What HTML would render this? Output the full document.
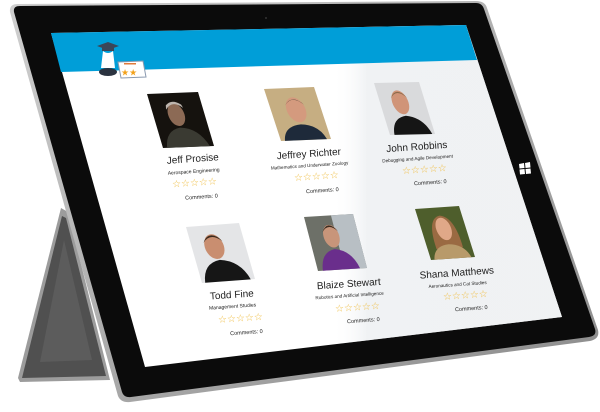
<!DOCTYPE html>
<html><head><meta charset="utf-8"><style>
html,body{margin:0;padding:0;background:#fff;width:600px;height:412px;overflow:hidden}
svg{display:block}
text{font-family:"Liberation Sans",sans-serif;fill:#222}
</style></head><body>
<svg width="600" height="412" viewBox="0 0 600 412" xmlns="http://www.w3.org/2000/svg">
<defs>
<linearGradient id="rim" x1="0" y1="0" x2="1" y2="1"><stop offset="0" stop-color="#d0d0d0"/><stop offset="1" stop-color="#8a8a8a"/></linearGradient>
<linearGradient id="glare" x1="0" y1="0" x2="1" y2="0"><stop offset="0" stop-color="#fff" stop-opacity="0"/><stop offset="0.55" stop-color="#fff" stop-opacity="0"/><stop offset="0.62" stop-color="#e9ecef" stop-opacity="0.7"/><stop offset="1" stop-color="#eef0f2" stop-opacity="0.9"/></linearGradient>
</defs>
<!-- kickstand -->
<polygon points="61,208 68,212 110,380 20,382 18,378" fill="#9c9c9c"/>
<polygon points="62,216 66,218 106,376 22,378" fill="#505050"/>
<polygon points="64,240 92,360 40,362" fill="#5c5c5c"/>
<!-- tablet -->
<path d="M10,12 Q9,4 18,4 L476,1 Q485,1 487,8 L598,330 Q600,339 590,341 L130,402 Q121,403 118,396 Z" fill="url(#rim)"/>
<path d="M14,12 Q13,6 20,6 L476,3 Q482,3 484,9 L595,329 Q597,336 589,337 L131,397 Q124,398 122,392 Z" fill="#0b0b0b"/>
<circle cx="266" cy="18" r="1" fill="#333"/>
<!-- screen -->
<polygon points="51,33 466,25 562,317 145,367" fill="#fff"/>
<polygon points="51,33 466,25 562,317 145,367" fill="url(#glare)"/>
<polygon points="51,33 466,25 477,60 61,72" fill="#009ed8"/>
<!-- logo -->
<polygon points="97,46 108,42 119,46 108,50" fill="#3b4658"/>
<rect x="102" y="47" width="12" height="4" fill="#3b4658"/>
<path d="M103,51 Q108,55 113,51 L115,68 L101,68 Z" fill="#fff"/>
<ellipse cx="108" cy="72" rx="9" ry="4" fill="#2b3340"/>
<polygon points="118,62 143,61 146,77 121,78" fill="#fff" stroke="#8a9ab0" stroke-width="1"/>
<rect x="124" y="63" width="12" height="1.5" fill="#e07a3a"/>
<text x="121" y="75.5" font-size="9" style="fill:#f2a11a">★★</text>
<!-- windows logo -->
<g fill="#fff"><polygon points="519,164 524,163 524.5,168 519.5,168.5"/><polygon points="525,163 530,162 530.5,167.5 525.5,168"/><polygon points="519.5,169.5 524.5,169 525,174 520,174.5"/><polygon points="525.5,169 530.5,168.5 531,173.5 526,174"/></g>

<!-- photos -->
<g transform="matrix(.51,-.02,.16,.54,147,94)">
<rect width="100" height="100" fill="#15120e"/><ellipse cx="45" cy="40" rx="16" ry="21" fill="#8c6a55"/><path d="M28,30 Q45,12 62,28 L60,22 Q45,10 30,22Z" fill="#bdb5ae"/><path d="M8,100 Q15,68 45,64 Q80,66 92,100Z" fill="#3a3a32"/></g>
<g transform="matrix(.50,-.02,.17,.52,264,89)">
<rect width="100" height="100" fill="#c6ae82"/><ellipse cx="50" cy="42" rx="19" ry="24" fill="#d49a7e"/><path d="M31,33 Q50,12 69,33 Q60,22 50,22 Q40,22 31,33Z" fill="#5a4a3a"/><path d="M8,100 Q15,72 50,70 Q85,72 92,100Z" fill="#1e2a3a"/></g>
<g transform="matrix(.45,-.01,.16,.52,374,83)">
<rect width="100" height="100" fill="#d9dadc"/><ellipse cx="45" cy="38" rx="18" ry="23" fill="#d09478"/><path d="M27,30 Q45,10 63,30 Q55,18 45,18 Q35,18 27,30Z" fill="#8a6a4a"/><path d="M10,100 Q15,68 48,64 Q85,68 94,100Z" fill="#151515"/></g>
<g transform="matrix(.53,-.04,.16,.56,186,227)">
<rect width="100" height="100" fill="#e4e5e7"/><ellipse cx="42" cy="38" rx="18" ry="22" fill="#c98e70"/><path d="M24,30 Q42,12 60,30 Q52,18 42,18 Q32,18 24,30Z" fill="#3a2a1e"/><path d="M6,100 Q12,66 45,62 Q82,66 92,100Z" fill="#161616"/></g>
<g transform="matrix(.49,-.03,.14,.54,304,217)">
<rect width="100" height="100" fill="#6d7068"/><rect x="55" width="45" height="100" fill="#b8bfc4"/><ellipse cx="45" cy="38" rx="16" ry="21" fill="#c8957a"/><path d="M29,30 Q45,12 61,30 Q53,18 45,18 Q37,18 29,30Z" fill="#3c2c20"/><path d="M10,100 Q15,66 45,62 Q78,66 86,100Z" fill="#6a2e8c"/></g>
<g transform="matrix(.44,-.03,.16,.51,415,209)">
<rect width="100" height="100" fill="#4e5e2c"/><path d="M20,80 Q18,20 50,16 Q82,20 80,80Z" fill="#9a6a42"/><ellipse cx="50" cy="42" rx="17" ry="22" fill="#e0a888"/><path d="M8,100 Q15,74 50,72 Q85,74 92,100Z" fill="#b89a6a"/></g>

<!-- text -->
<g transform="translate(193,162) rotate(-4)" text-anchor="middle"><text font-size="10">Jeff Prosise</text><text y="11" font-size="5">Aerospace Engineering</text><text y="24" font-size="10" style="fill:#f0c04a">☆☆☆☆☆</text><text y="37" x="6" font-size="5.5">Comments: 0</text></g>
<g transform="translate(309,157) rotate(-4)" text-anchor="middle"><text font-size="10">Jeffrey Richter</text><text y="10" font-size="4.6">Mathematics and Underwater Zoology</text><text y="23" x="6" font-size="10" style="fill:#f0c04a">☆☆☆☆☆</text><text y="36" x="11" font-size="5.5">Comments: 0</text></g>
<g transform="translate(417,150) rotate(-4)" text-anchor="middle"><text font-size="10">John Robbins</text><text y="10" font-size="4.6">Debugging and Agile Development</text><text y="23" x="6" font-size="10" style="fill:#f0c04a">☆☆☆☆☆</text><text y="35" x="11" font-size="5.5">Comments: 0</text></g>
<g transform="translate(232,298) rotate(-4)" text-anchor="middle"><text font-size="10">Todd Fine</text><text y="10" font-size="5">Management Studies</text><text y="24" x="7" font-size="10" style="fill:#f0c04a">☆☆☆☆☆</text><text y="37" x="12" font-size="5.5">Comments: 0</text></g>
<g transform="translate(349,287) rotate(-4)" text-anchor="middle"><text font-size="10">Blaize Stewart</text><text y="10" font-size="4.6">Robotics and Artificial Intelligence</text><text y="24" x="7" font-size="10" style="fill:#f0c04a">☆☆☆☆☆</text><text y="36" x="12" font-size="5.5">Comments: 0</text></g>
<g transform="translate(457,276) rotate(-4)" text-anchor="middle"><text font-size="10">Shana Matthews</text><text y="10" font-size="4.6">Aeronautics and Cat Studies</text><text y="23" x="7" font-size="10" style="fill:#f0c04a">☆☆☆☆☆</text><text y="35" x="12" font-size="5.5">Comments: 0</text></g>
</svg>
</body></html>
